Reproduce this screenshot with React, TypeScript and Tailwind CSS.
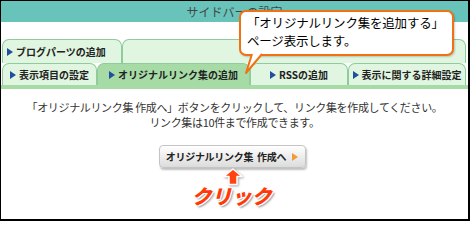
const JP = 'font-["Noto_Sans_CJK_JP","Noto_Sans",sans-serif]'

const row1 = [
  { label: 'ブログパーツの追加', w: 'w-[120px]' },
  { label: '', w: 'flex-1' },
]

const row2 = [
  { label: '表示項目の設定', w: 'w-[95px]', active: false },
  { label: 'オリジナルリンク集の追加', w: 'w-[153px]', active: true },
  { label: 'RSSの追加', w: 'w-[98px]', active: false },
  { label: '表示に関する詳細設定', w: 'w-[118px]', active: false },
]

function Marker() {
  return (
    <svg width="6" height="8" viewBox="0 0 6 8" className="shrink-0">
      <polygon points="0,0 6,4 0,8" fill="#1f4f9e" />
    </svg>
  )
}

function Tab({
  label,
  w,
  active,
  centered,
}: {
  label: string
  w: string
  active?: boolean
  centered?: boolean
}) {
  return (
    <div
      className={`${w} h-full flex items-center gap-[3px] rounded-t-[7px] border border-b-0 border-[#8fcb9d] ${
        centered ? 'justify-center' : 'pl-[4px]'
      } ${active ? 'bg-[#a6dba6]' : 'bg-[#e0f6e0]'}`}
    >
      {label && (
        <>
          <Marker />
          <span className="text-[10px] font-bold text-[#222] whitespace-nowrap leading-none">{label}</span>
        </>
      )}
    </div>
  )
}

export default function App() {
  return (
    <div
      className={`${JP} relative w-[470px] h-[221px] overflow-hidden bg-white border-black border-l border-t border-r-2 border-b-2 flex flex-col`}
    >
      {/* header */}
      <div className="h-[21px] shrink-0 bg-[#68c4bb] flex items-center justify-center text-[12px] text-[#444]">
        サイドバーの設定
      </div>

      {/* tabs */}
      <div className="mt-[17px] pl-[1px] pr-[2px]">
        <div className="flex h-[24px]">
          {row1.map((t) => (
            <Tab key={t.w} label={t.label} w={t.w} />
          ))}
        </div>
        <div className="flex h-[22px]">
          {row2.map((t) => (
            <Tab key={t.label} label={t.label} w={t.w} active={t.active} centered />
          ))}
        </div>
      </div>
      <div className="h-[4px] shrink-0 bg-[#a6dba6]" />

      {/* content */}
      <div className="flex flex-col items-center pt-[11px] text-[#333]">
        <p className="text-center text-[11px] leading-[15px] tracking-[-0.35px]">
          「オリジナルリンク集 作成へ」ボタンをクリックして、リンク集を作成してください。
          <br />
          リンク集は10件まで作成できます。
        </p>

        <button className="mt-[15px] ml-[-5px] w-[147px] h-[23px] flex items-center justify-center gap-[6px] rounded-[4px] border border-[#c4c4c4] bg-linear-to-b from-white to-[#dcdcdc] shadow-[1px_2px_2px_rgba(0,0,0,0.25)] text-[10px] font-bold text-[#222] tracking-[-0.3px]">
          <span>
            オリジナルリンク集<span className="inline-block w-[4px]" />作成へ
          </span>
          <svg width="6" height="8" viewBox="0 0 6 8">
            <polygon points="0,0 6,4 0,8" fill="#f39a3a" />
          </svg>
        </button>

        <svg width="22" height="18" viewBox="0 0 22 18" className="ml-[-3px] drop-shadow-[1px_1px_1px_rgba(0,0,0,0.35)]">
          <polygon
            points="11,1 20,8.5 15,8.5 15,16.5 7,16.5 7,8.5 2,8.5"
            fill="#ff4412"
            stroke="#fff"
            strokeWidth="1.5"
            strokeLinejoin="round"
          />
        </svg>

        <span className="ml-[-6px] mt-[-1px] text-[20px] leading-[22px] font-black italic text-[#ff3a0a] [text-shadow:-1px_-1px_0_#fff,1px_-1px_0_#fff,-1px_1px_0_#fff,1px_1px_0_#fff,2px_2px_2px_rgba(0,0,0,0.4)]">
          クリック
        </span>
      </div>

      {/* callout */}
      <div className="absolute left-[238px] top-[9px] w-[215px] h-[46px] rounded-[7px] border-2 border-[#f07214] bg-white pl-[6px] pt-[2px] text-[12.5px] leading-[18px] tracking-[-0.2px] text-black shadow-[1px_1px_2px_rgba(0,0,0,0.2)]">
        「オリジナルリンク集を追加する」
        <br />
        ページ表示します。
      </div>
      <svg width="30" height="26" viewBox="0 0 30 26" className="absolute left-[240px] top-[50px]">
        <path d="M11 3 L5 22 L21 3" fill="#fff" stroke="#f07214" strokeWidth="2" strokeLinejoin="round" />
      </svg>
    </div>
  )
}
